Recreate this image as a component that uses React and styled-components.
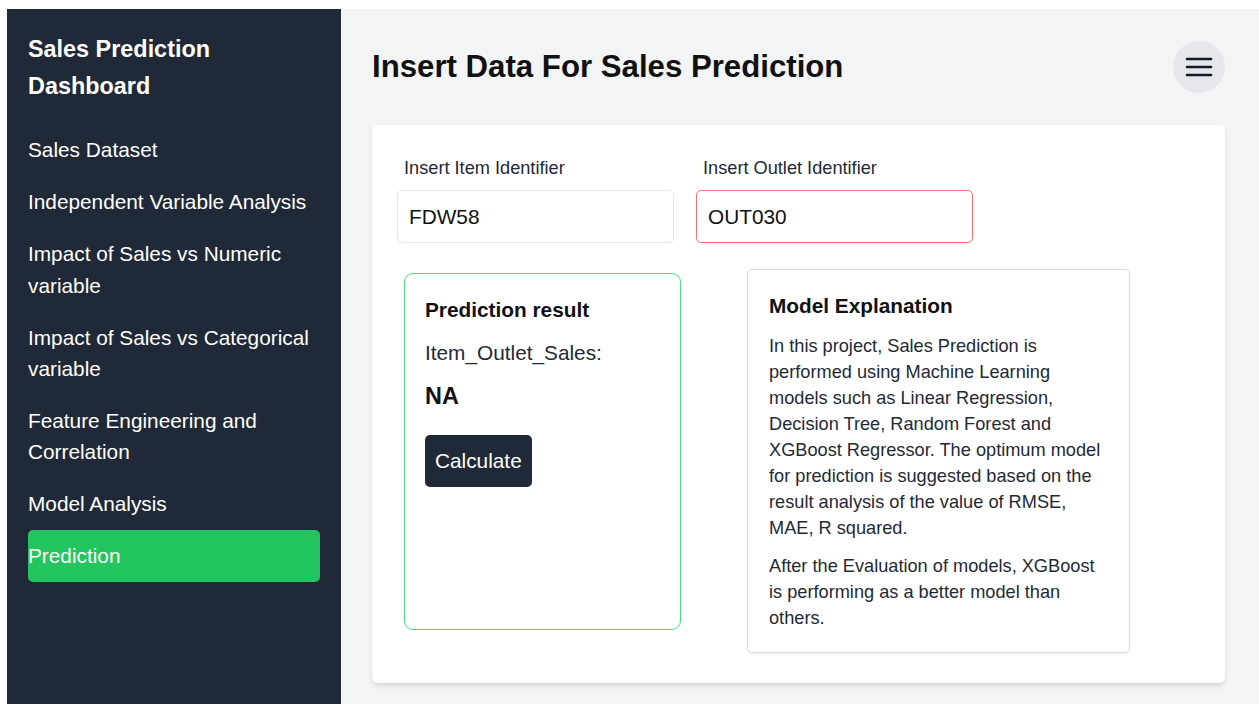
import React from 'react';
import styled, { createGlobalStyle } from 'styled-components';

const GlobalStyle = createGlobalStyle`
  html, body {
    margin: 0;
    padding: 0;
    background: #ffffff;
    font-family: "Liberation Sans", Arial, sans-serif;
  }
  * { box-sizing: border-box; }
`;

const navItems = [
  'Sales Dataset',
  'Independent Variable Analysis',
  'Impact of Sales vs Numeric variable',
  'Impact of Sales vs Categorical variable',
  'Feature Engineering and Correlation',
  'Model Analysis',
  'Prediction',
];

function MenuIcon() {
  return (
    <svg width="28" height="22" viewBox="0 0 28 22">
      <g stroke="#111827" strokeWidth="2.6" strokeLinecap="round">
        <line x1="2" y1="3" x2="26" y2="3" />
        <line x1="2" y1="11" x2="26" y2="11" />
        <line x1="2" y1="19" x2="26" y2="19" />
      </g>
    </svg>
  );
}

function Sidebar() {
  return (
    <Side>
      <Brand>Sales Prediction Dashboard</Brand>
      <NavList>
        {navItems.map((item) => (
          <NavItem key={item} active={item === 'Prediction'}>
            {item}
          </NavItem>
        ))}
      </NavList>
    </Side>
  );
}

function App() {
  return (
    <>
      <GlobalStyle />
      <Page>
        <Sidebar />
        <Main>
          <Header>
            <Title>Insert Data For Sales Prediction</Title>
            <MenuButton aria-label="menu">
              <MenuIcon />
            </MenuButton>
          </Header>
          <Card>
            <InputRow>
              <Field>
                <Label>Insert Item Identifier</Label>
                <Input defaultValue="FDW58" />
              </Field>
              <Field>
                <Label>Insert Outlet Identifier</Label>
                <Input defaultValue="OUT030" invalid />
              </Field>
            </InputRow>
            <ResultRow>
              <ResultBox>
                <BoxTitle>Prediction result</BoxTitle>
                <ResultLabel>Item_Outlet_Sales:</ResultLabel>
                <ResultValue>NA</ResultValue>
                <CalcButton>Calculate</CalcButton>
              </ResultBox>
              <ExplainBox>
                <BoxTitle>Model Explanation</BoxTitle>
                <Para>
                  In this project, Sales Prediction is performed using Machine
                  Learning models such as Linear Regression, Decision Tree, Random
                  Forest and XGBoost Regressor. The optimum model for prediction is
                  suggested based on the result analysis of the value of RMSE, MAE,
                  R squared.
                </Para>
                <Para>
                  After the Evaluation of models, XGBoost is performing as a better
                  model than others.
                </Para>
              </ExplainBox>
            </ResultRow>
          </Card>
        </Main>
      </Page>
    </>
  );
}

export default App;

const Page = styled.div`
  display: flex;
  min-height: 100vh;
  padding: 9px 0 0 7px;
  background: #ffffff;
`;

const Side = styled.aside`
  width: 334px;
  flex-shrink: 0;
  background: #1f2937;
  color: #ffffff;
  padding: 22px 21px;
`;

const Brand = styled.h1`
  margin: 0 0 19px;
  font-size: 23.4px;
  line-height: 37px;
  font-weight: 700;
`;

const NavList = styled.nav`
  display: flex;
  flex-direction: column;
`;

const NavItem = styled.div`
  padding: 10.4px 0;
  font-size: 20.8px;
  line-height: 31.2px;
  border-radius: 5px;
  background: ${(p) => (p.active ? '#22c55e' : 'transparent')};
  color: #ffffff;
`;

const Main = styled.main`
  flex: 1;
  background: #f3f4f6;
  padding: 32px 34px 0 31px;
`;

const Header = styled.header`
  display: flex;
  align-items: center;
  justify-content: space-between;
  height: 52px;
  margin-bottom: 32px;
`;

const Title = styled.h2`
  margin: 0;
  font-size: 31.2px;
  font-weight: 700;
  color: #111111;
`;

const MenuButton = styled.button`
  width: 52px;
  height: 52px;
  border-radius: 50%;
  border: 0;
  background: #e5e7eb;
  display: flex;
  align-items: center;
  justify-content: center;
  padding: 0;
`;

const Card = styled.section`
  background: #ffffff;
  border-radius: 6px;
  box-shadow: 0 4px 6px -1px rgba(0, 0, 0, 0.1), 0 2px 4px -2px rgba(0, 0, 0, 0.1);
  padding: 30px 25px 30px;
`;

const InputRow = styled.div`
  display: flex;
  gap: 22px;
`;

const Field = styled.div`
  display: flex;
  flex-direction: column;
  width: 277px;
`;

const Label = styled.label`
  margin: 0 0 9px 7px;
  font-size: 18.2px;
  line-height: 26px;
  color: #1f2937;
`;

const Input = styled.input`
  height: 53px;
  padding: 0 11px;
  font-family: inherit;
  font-size: 20.8px;
  color: #111111;
  border: 1.3px solid ${(p) => (p.invalid ? '#f87171' : '#e5e7eb')};
  border-radius: 5px;
  outline: none;
  background: #ffffff;
`;

const ResultRow = styled.div`
  display: flex;
  align-items: flex-start;
  margin-top: 26px;
`;

const ResultBox = styled.div`
  width: 277px;
  height: 357px;
  margin: 4px 0 0 7px;
  border: 1.5px solid #4ade80;
  border-radius: 9px;
  padding: 20px 20px;
  display: flex;
  flex-direction: column;
  align-items: flex-start;
`;

const BoxTitle = styled.h3`
  margin: 0;
  font-size: 20.8px;
  line-height: 31px;
  font-weight: 700;
  color: #111111;
`;

const ResultLabel = styled.p`
  margin: 12px 0 0;
  font-size: 20.8px;
  line-height: 31px;
  color: #1f2937;
`;

const ResultValue = styled.p`
  margin: 11px 0 0;
  font-size: 23.4px;
  line-height: 34px;
  font-weight: 700;
  color: #111111;
`;

const CalcButton = styled.button`
  margin-top: 22px;
  height: 52px;
  padding: 0 10px;
  border: 0;
  border-radius: 5px;
  background: #1f2937;
  color: #ffffff;
  font-family: inherit;
  font-size: 20.8px;
`;

const ExplainBox = styled.div`
  width: 383px;
  margin-left: 66px;
  border: 1.3px solid #d9dbe0;
  border-radius: 5px;
  box-shadow: 0 1px 2px rgba(0, 0, 0, 0.08);
  padding: 20px 22px 21px 21px;
`;

const Para = styled.p`
  margin: 12px 0 0;
  font-size: 18.2px;
  line-height: 26px;
  color: #1f2937;
`;
